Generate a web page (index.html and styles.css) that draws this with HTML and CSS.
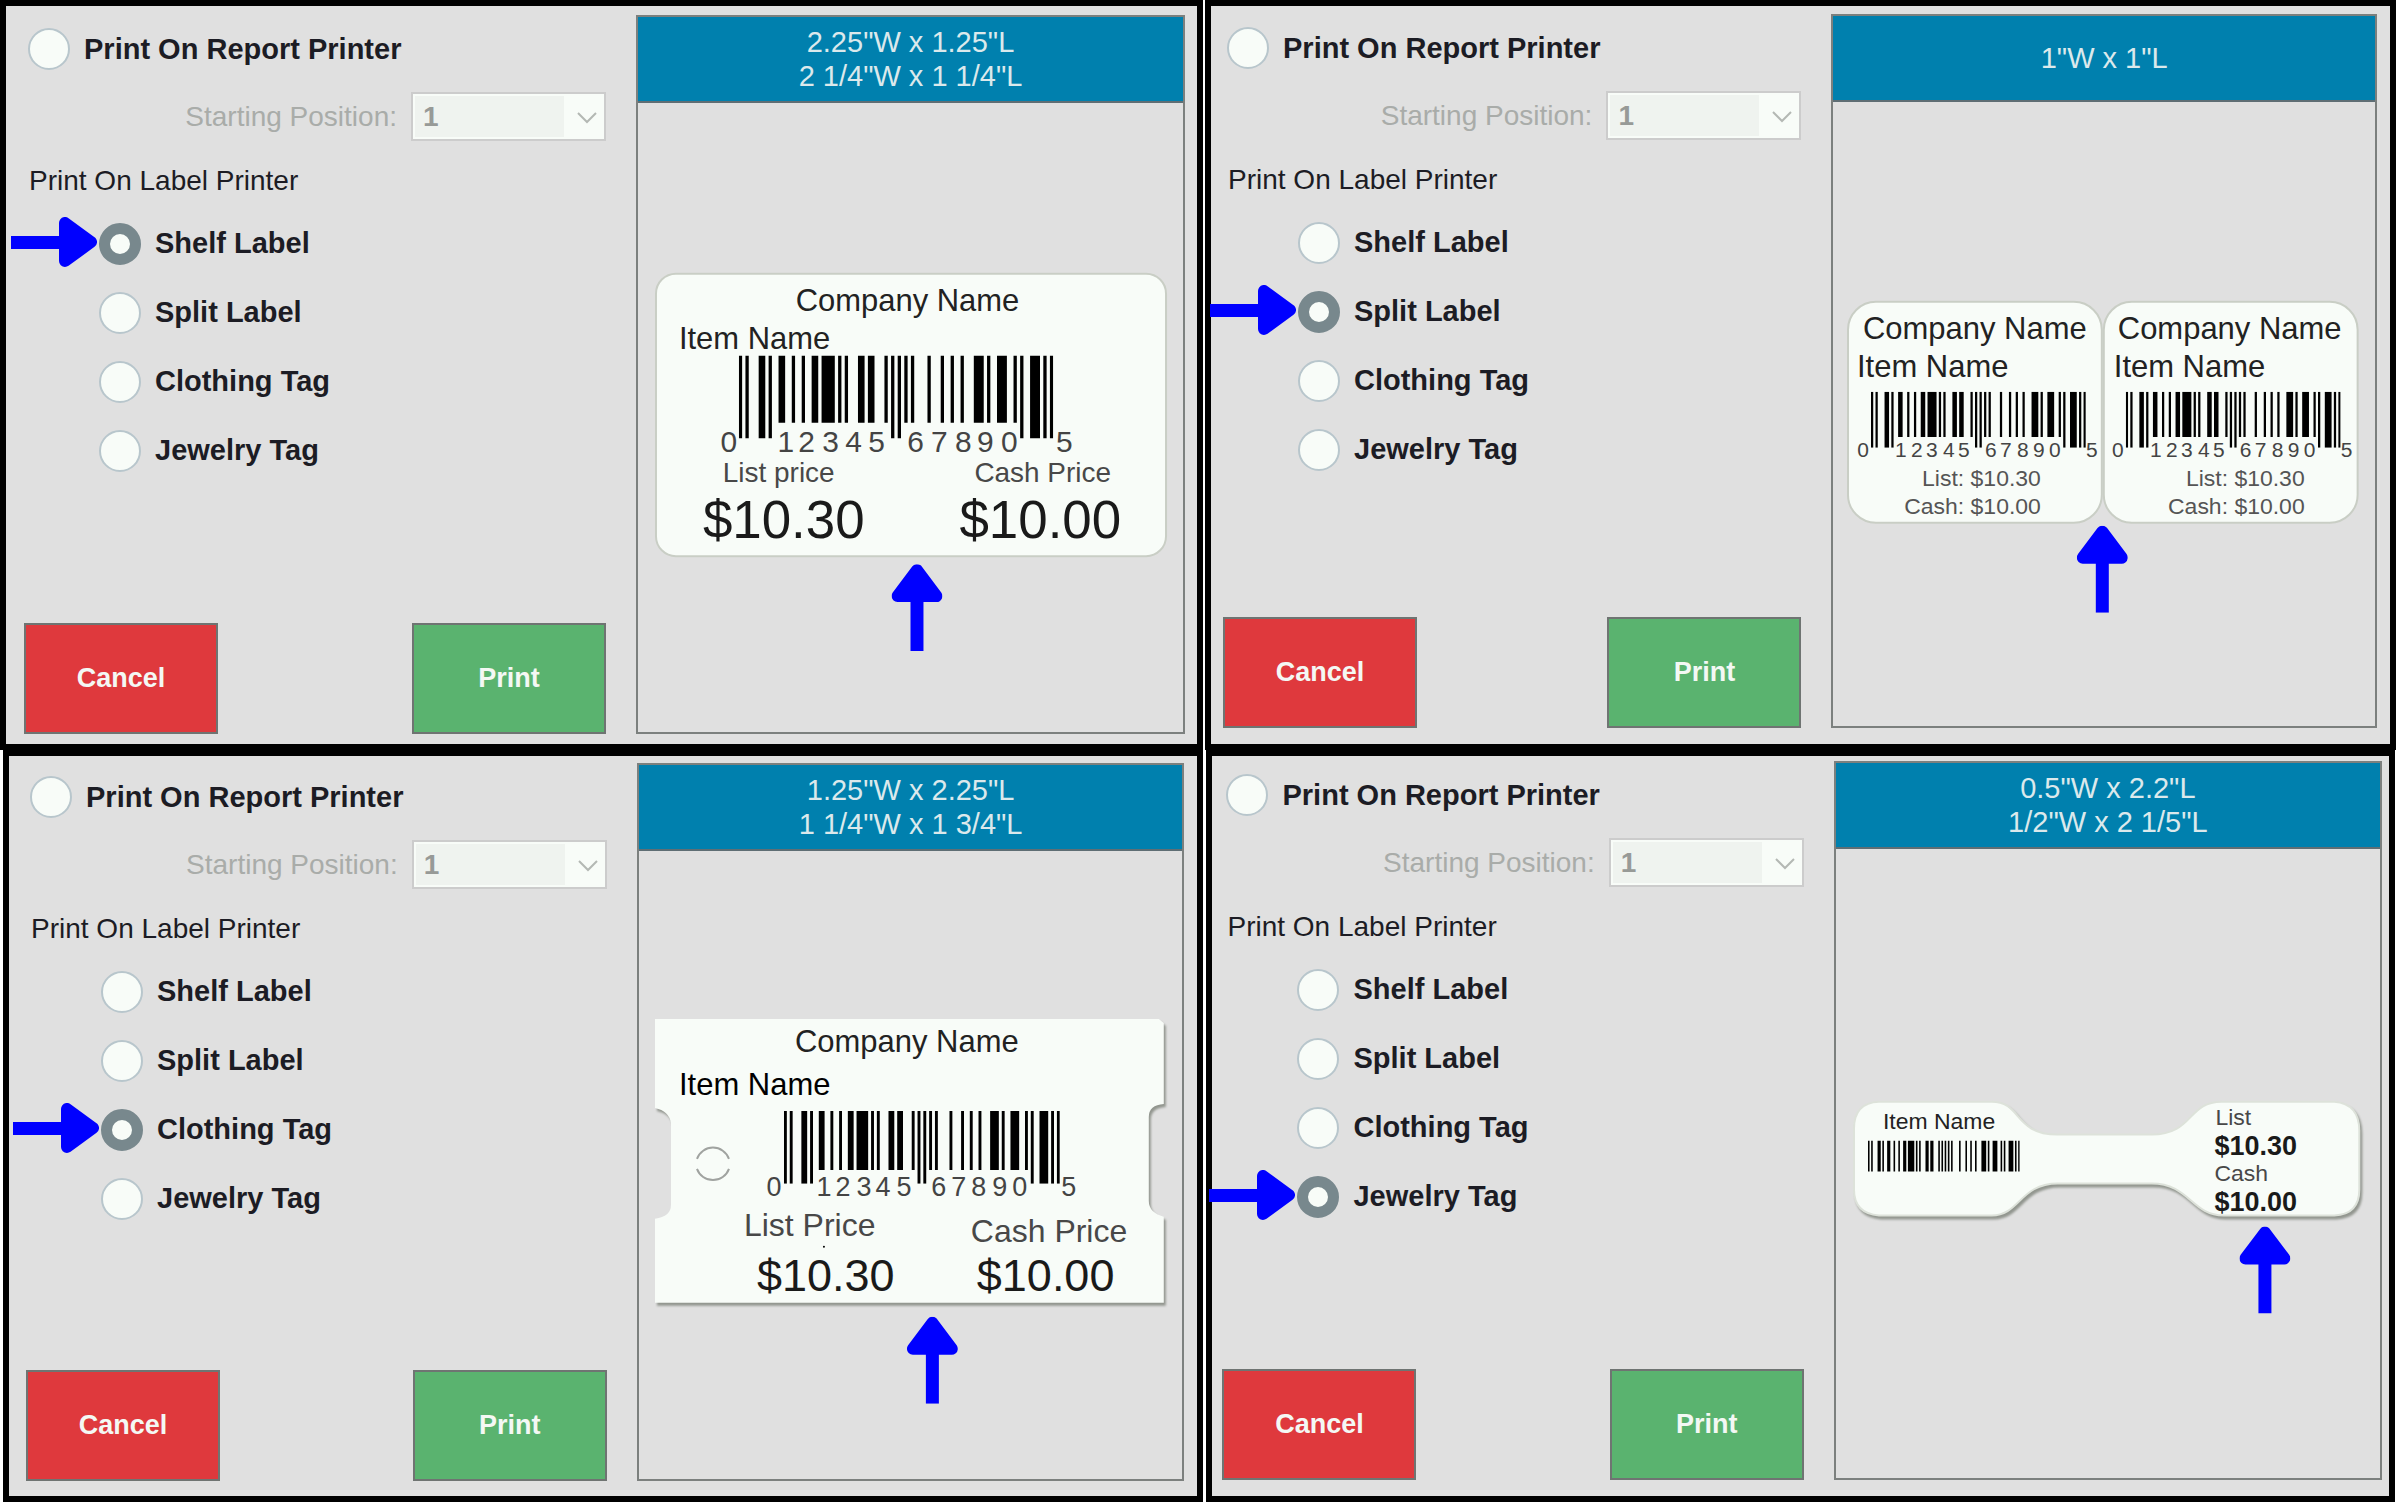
FILE: index.html
```html
<!DOCTYPE html>
<html lang="en">
<head>
  <meta charset="UTF-8">
  <meta name="viewport" content="width=device-width, initial-scale=1.0">
  <title>Print Labels</title>
  <link rel="stylesheet" href="styles.css">
</head>
<body>
  <!-- Shared shapes -->
  <svg class="defs" aria-hidden="true">
    <defs>
      <g id="bars">
        <path d="M0 0h1v100h-1zM2 0h1v100h-1zM6 0h2v100h-2zM9 0h1v100h-1zM46 0h1v100h-1zM48 0h1v100h-1zM85 0h1v100h-1zM88 0h3v100h-3zM92 0h1v100h-1zM94 0h1v100h-1z"/>
        <path d="M12 0h2v81h-2zM16 0h1v81h-1zM19 0h1v81h-1zM22 0h2v81h-2zM25 0h4v81h-4zM30 0h1v81h-1zM32 0h1v81h-1zM36 0h2v81h-2zM39 0h2v81h-2zM44 0h1v81h-1z"/>
        <path d="M50 0h1v81h-1zM52 0h1v81h-1zM57 0h1v81h-1zM61 0h1v81h-1zM64 0h1v81h-1zM67 0h1v81h-1zM71 0h3v81h-3zM75 0h1v81h-1zM78 0h3v81h-3zM83 0h1v81h-1z"/>
      </g>
      <symbol id="barcode" viewBox="0 0 95 100" preserveAspectRatio="none"><use href="#bars"/></symbol>
      <symbol id="barcode-flat" viewBox="0 0 95 80" preserveAspectRatio="none"><use href="#bars"/></symbol>
      <symbol id="arrow-up" viewBox="0 0 51 87">
        <path d="M25.500 6L45 32H6z" fill="#00f" stroke="#00f" stroke-width="12" stroke-linejoin="round"/>
        <path d="M19 32h13v55H19z" fill="#00f"/>
      </symbol>
      <symbol id="arrow-right" viewBox="0 0 86 50">
        <path d="M80 25L54 6v38z" fill="#00f" stroke="#00f" stroke-width="12" stroke-linejoin="round"/>
        <path d="M0 19h54v13H0z" fill="#00f"/>
      </symbol>
      <symbol id="chevron" viewBox="0 0 20 12">
        <path d="M1 1l9 9 9-9" fill="none" stroke="#b4b8b4" stroke-width="2"/>
      </symbol>
    </defs>
  </svg>

  <main class="screens">
    <div class="row row-top">
      <!-- Shelf label -->
      <form class="screen screen-shelf">
        <section class="options">
          <div class="radio-row">
            <input type="radio" name="target1" id="report1">
            <label for="report1">Print On Report Printer</label>
          </div>
          <div class="position-row">
            <label for="position1">Starting Position:</label>
            <div class="select-box">
              <select id="position1" disabled><option>1</option></select>
              <svg class="chevron"><use href="#chevron"/></svg>
            </div>
          </div>
          <p class="group-title">Print On Label Printer</p>
          <div class="radio-list">
            <div class="radio-row">
              <svg class="pointer"><use href="#arrow-right"/></svg>
              <input type="radio" name="target1" id="shelf1" checked>
              <label for="shelf1">Shelf Label</label>
            </div>
            <div class="radio-row">
              <input type="radio" name="target1" id="split1">
              <label for="split1">Split Label</label>
            </div>
            <div class="radio-row">
              <input type="radio" name="target1" id="clothing1">
              <label for="clothing1">Clothing Tag</label>
            </div>
            <div class="radio-row">
              <input type="radio" name="target1" id="jewelry1">
              <label for="jewelry1">Jewelry Tag</label>
            </div>
          </div>
          <div class="buttons">
            <button type="button" class="btn btn-cancel">Cancel</button>
            <button type="button" class="btn btn-print">Print</button>
          </div>
        </section>
        <section class="preview">
          <h2 class="preview-title">2.25"W x 1.25"L<br>2 1/4"W x 1 1/4"L</h2>
          <svg class="sample" viewBox="0 0 546 560">
            <rect class="paper" x="18" y="171" width="511" height="283" rx="20"/>
            <text class="name" x="158" y="208">Company Name</text>
            <text class="name" x="41" y="246">Item Name</text>
            <use href="#barcode" x="101" y="253" width="315" height="83"/>
            <text class="digits" x="91 148 169 193 216 239 278 302 326 348 372 427" y="350">012345678905</text>
            <text class="caption" x="85" y="380">List price</text>
            <text class="caption" x="337" y="380">Cash Price</text>
            <text class="price" x="65" y="436">$10.30</text>
            <text class="price" x="322" y="436">$10.00</text>
            <use href="#arrow-up" x="254" y="462" width="51" height="87"/>
          </svg>
        </section>
      </form>

      <!-- Split label -->
      <form class="screen screen-split">
        <section class="options">
          <div class="radio-row">
            <input type="radio" name="target2" id="report2">
            <label for="report2">Print On Report Printer</label>
          </div>
          <div class="position-row">
            <label for="position2">Starting Position:</label>
            <div class="select-box">
              <select id="position2" disabled><option>1</option></select>
              <svg class="chevron"><use href="#chevron"/></svg>
            </div>
          </div>
          <p class="group-title">Print On Label Printer</p>
          <div class="radio-list">
            <div class="radio-row">
              <input type="radio" name="target2" id="shelf2">
              <label for="shelf2">Shelf Label</label>
            </div>
            <div class="radio-row">
              <svg class="pointer"><use href="#arrow-right"/></svg>
              <input type="radio" name="target2" id="split2" checked>
              <label for="split2">Split Label</label>
            </div>
            <div class="radio-row">
              <input type="radio" name="target2" id="clothing2">
              <label for="clothing2">Clothing Tag</label>
            </div>
            <div class="radio-row">
              <input type="radio" name="target2" id="jewelry2">
              <label for="jewelry2">Jewelry Tag</label>
            </div>
          </div>
          <div class="buttons">
            <button type="button" class="btn btn-cancel">Cancel</button>
            <button type="button" class="btn btn-print">Print</button>
          </div>
        </section>
        <section class="preview">
          <h2 class="preview-title">1"W x 1"L</h2>
          <svg class="sample" viewBox="0 0 542 560">
            <rect class="paper" x="15" y="200" width="254" height="221" rx="28"/>
            <text class="name" x="30" y="237">Company Name</text>
            <text class="name" x="24" y="275">Item Name</text>
            <use href="#barcode" x="38" y="290" width="215" height="56"/>
            <text class="digits digits-small" x="30 68 84 99 116 131 158 173 190 206 222 259" y="355">012345678905</text>
            <text class="line" x="208" y="384">List: $10.30</text>
            <text class="line" x="208" y="412">Cash: $10.00</text>

            <rect class="paper" x="271" y="200" width="254" height="221" rx="28"/>
            <text class="name" x="285" y="237">Company Name</text>
            <text class="name" x="281" y="275">Item Name</text>
            <use href="#barcode" x="293" y="290" width="215" height="56"/>
            <text class="digits digits-small" x="285 323 339 354 371 386 413 428 445 461 477 514" y="355">012345678905</text>
            <text class="line" x="472" y="384">List: $10.30</text>
            <text class="line" x="472" y="412">Cash: $10.00</text>
            <use href="#arrow-up" x="244" y="424" width="51" height="87"/>
          </svg>
        </section>
      </form>
    </div>

    <div class="row row-bottom">
      <!-- Clothing tag -->
      <form class="screen screen-clothing">
        <section class="options">
          <div class="radio-row">
            <input type="radio" name="target3" id="report3">
            <label for="report3">Print On Report Printer</label>
          </div>
          <div class="position-row">
            <label for="position3">Starting Position:</label>
            <div class="select-box">
              <select id="position3" disabled><option>1</option></select>
              <svg class="chevron"><use href="#chevron"/></svg>
            </div>
          </div>
          <p class="group-title">Print On Label Printer</p>
          <div class="radio-list">
            <div class="radio-row">
              <input type="radio" name="target3" id="shelf3">
              <label for="shelf3">Shelf Label</label>
            </div>
            <div class="radio-row">
              <input type="radio" name="target3" id="split3">
              <label for="split3">Split Label</label>
            </div>
            <div class="radio-row">
              <svg class="pointer"><use href="#arrow-right"/></svg>
              <input type="radio" name="target3" id="clothing3" checked>
              <label for="clothing3">Clothing Tag</label>
            </div>
            <div class="radio-row">
              <input type="radio" name="target3" id="jewelry3">
              <label for="jewelry3">Jewelry Tag</label>
            </div>
          </div>
          <div class="buttons">
            <button type="button" class="btn btn-cancel">Cancel</button>
            <button type="button" class="btn btn-print">Print</button>
          </div>
        </section>
        <section class="preview">
          <h2 class="preview-title">1.25"W x 2.25"L<br>1 1/4"W x 1 3/4"L</h2>
          <svg class="sample" viewBox="0 0 544 560">
            <path class="tag" d="M16 168H520L525 172V253Q510 254 510 266V350Q510 362 525 366V452H16V368Q32 366 32 354V272Q30 260 16 257z"/>
            <text class="name" x="156" y="201">Company Name</text>
            <text class="name name-dark" x="40" y="244">Item Name</text>
            <path class="hole" d="M58 308a17 17 0 0 1 32 0M58 318a17 17 0 0 0 32 0"/>
            <use href="#barcode" x="145" y="260" width="276" height="73"/>
            <text class="digits digits-medium" x="135 185 204 225 244 265 300 320 340 361 381 430" y="345">012345678905</text>
            <text class="caption caption-large" x="105" y="385">List Price</text>
            <text class="caption caption-large" x="332" y="391">Cash Price</text>
            <circle cx="185" cy="396" r="1"/>
            <text class="price price-medium" x="118" y="440">$10.30</text>
            <text class="price price-medium" x="338" y="440">$10.00</text>
            <use href="#arrow-up" x="268" y="466" width="51" height="87"/>
          </svg>
        </section>
      </form>

      <!-- Jewelry tag -->
      <form class="screen screen-jewelry">
        <section class="options">
          <div class="radio-row">
            <input type="radio" name="target4" id="report4">
            <label for="report4">Print On Report Printer</label>
          </div>
          <div class="position-row">
            <label for="position4">Starting Position:</label>
            <div class="select-box">
              <select id="position4" disabled><option>1</option></select>
              <svg class="chevron"><use href="#chevron"/></svg>
            </div>
          </div>
          <p class="group-title">Print On Label Printer</p>
          <div class="radio-list">
            <div class="radio-row">
              <input type="radio" name="target4" id="shelf4">
              <label for="shelf4">Shelf Label</label>
            </div>
            <div class="radio-row">
              <input type="radio" name="target4" id="split4">
              <label for="split4">Split Label</label>
            </div>
            <div class="radio-row">
              <input type="radio" name="target4" id="clothing4">
              <label for="clothing4">Clothing Tag</label>
            </div>
            <div class="radio-row">
              <svg class="pointer"><use href="#arrow-right"/></svg>
              <input type="radio" name="target4" id="jewelry4" checked>
              <label for="jewelry4">Jewelry Tag</label>
            </div>
          </div>
          <div class="buttons">
            <button type="button" class="btn btn-cancel">Cancel</button>
            <button type="button" class="btn btn-print">Print</button>
          </div>
        </section>
        <section class="preview">
          <h2 class="preview-title">0.5"W x 2.2"L<br>1/2"W x 2 1/5"L</h2>
          <svg class="sample" viewBox="0 0 545 560">
            <path class="tag tag-outline" d="M43 253H156C186 253 178 286 222 286H316C358 286 352 253 386 253H499Q524 255 524 282V341Q524 366 499 367H388C356 367 354 335 316 335H222C184 335 184 367 156 367H43Q18 365 18 341V280Q18 254 43 253z"/>
            <text class="name name-small" x="47" y="280">Item Name</text>
            <use href="#barcode-flat" x="32" y="292" width="152" height="31"/>
            <text class="caption caption-small" x="380" y="276">List</text>
            <text class="price price-small" x="379" y="306">$10.30</text>
            <text class="caption caption-small" x="379" y="332">Cash</text>
            <text class="price price-small" x="379" y="362">$10.00</text>
            <use href="#arrow-up" x="404" y="378" width="51" height="87"/>
          </svg>
        </section>
      </form>
    </div>
  </main>
</body>
</html>
```

FILE: styles.css
```css
* {
  margin: 0;
  padding: 0;
  box-sizing: border-box;
}

body {
  background: #ffffff;
  color: #1c1c24;
  font-family: "Liberation Sans", Arial, sans-serif;
  font-size: 28px;
}

.defs {
  position: absolute;
  width: 0;
  height: 0;
}

/* Screens */
.screens {
  display: grid;
  grid-template-rows: 750fr 752fr;
  min-height: 100vh;
}

.row {
  display: grid;
  grid-template-columns: 1203fr 1191fr;
  gap: 2px;
}

.row-top {
  padding-right: 1px;
}

.row-bottom {
  gap: 3px;
  padding: 0 2px 1px 3px;
}

.screen {
  display: grid;
  grid-template-columns: 582fr 549fr;
  gap: 30px;
  border: 6px solid #000000;
  background: #e0e0e0;
}

.screen-shelf {
  padding: 9px 12px 10px 18px;
}

.screen-split {
  padding: 8px 13px 16px 12px;
}

.screen-clothing {
  padding: 7px 13px 15px 17px;
}

.screen-jewelry {
  padding: 5px 7px 16px 10px;
}

/* Options column */
.options {
  display: flex;
  flex-direction: column;
  padding-top: 10px;
}

.radio-row {
  position: relative;
  display: flex;
  align-items: center;
  gap: 14px;
  height: 48px;
  padding-left: 4px;
  font-size: 29px;
  font-weight: bold;
}

.radio-row input {
  appearance: none;
  width: 42px;
  height: 42px;
  border: 2px solid #b8c6cc;
  border-radius: 50%;
  background: #f8fcf8;
}

.radio-row input:checked {
  border: 11px solid #78888d;
}

.position-row {
  display: flex;
  justify-content: flex-end;
  align-items: center;
  gap: 14px;
  margin-top: 19px;
  color: #a9aca9;
}

.select-box {
  position: relative;
}

.select-box select {
  appearance: none;
  display: block;
  width: 195px;
  height: 49px;
  padding: 0 10px;
  border: 2px solid #cccccc;
  background: linear-gradient(to left, #f8fcf8 40px, #eff3ef 40px);
  box-shadow: inset 0 0 0 2px #f8fcf8;
  color: #979a97;
  font: bold 28px "Liberation Sans", Arial, sans-serif;
  opacity: 1;
}

.chevron {
  position: absolute;
  top: 20px;
  right: 9px;
  width: 20px;
  height: 12px;
}

.group-title {
  margin: 20px 0 8px 5px;
  line-height: 40px;
}

.radio-list {
  padding-left: 71px;
}

.radio-list .radio-row {
  height: 69px;
}

.pointer {
  position: absolute;
  top: 8px;
  left: -84px;
  width: 86px;
  height: 50px;
}

/* Buttons */
.buttons {
  display: flex;
  justify-content: space-between;
  margin-top: auto;
}

.btn {
  width: 194px;
  height: 111px;
  border: 2px solid #6f7472;
  color: #f4f8f4;
  font: bold 27px "Liberation Sans", Arial, sans-serif;
}

.btn-cancel {
  background: #df393d;
}

.btn-print {
  background: #5ab36f;
}

/* Preview */
.preview {
  border: 2px solid #7c807e;
}

.preview-title {
  display: flex;
  align-items: center;
  justify-content: center;
  height: 86px;
  border-bottom: 2px solid #5f6e74;
  background: #0080ae;
  color: #dbe9ec;
  font-size: 29px;
  font-weight: normal;
  line-height: 34px;
  text-align: center;
}

.sample {
  display: block;
  width: 100%;
  font-size: 31px;
}

.paper {
  fill: #f8fcf8;
  stroke: #c9cec5;
  stroke-width: 2;
}

.tag {
  fill: #f8fcf8;
  filter: drop-shadow(2px 3px 1px #92968f);
}

.tag-outline {
  stroke: #dde2da;
  stroke-width: 2;
}

.hole {
  fill: none;
  stroke: #a0a3a0;
  stroke-width: 2;
}

.name {
  fill: #222222;
}

.name-dark {
  fill: #000000;
}

.name-small {
  font-size: 23px;
}

.digits {
  fill: #444444;
  font-size: 30px;
  text-anchor: middle;
}

.digits-medium {
  font-size: 27px;
}

.digits-small {
  font-size: 21px;
}

.caption {
  fill: #484848;
  font-size: 28px;
}

.caption-large {
  font-size: 32px;
}

.caption-small {
  font-size: 23px;
}

.line {
  fill: #555555;
  font-size: 23px;
  text-anchor: end;
}

.price {
  fill: #1a1a1a;
  font-size: 53px;
}

.price-medium {
  font-size: 45px;
}

.price-small {
  font-size: 27px;
  font-weight: bold;
}
```
